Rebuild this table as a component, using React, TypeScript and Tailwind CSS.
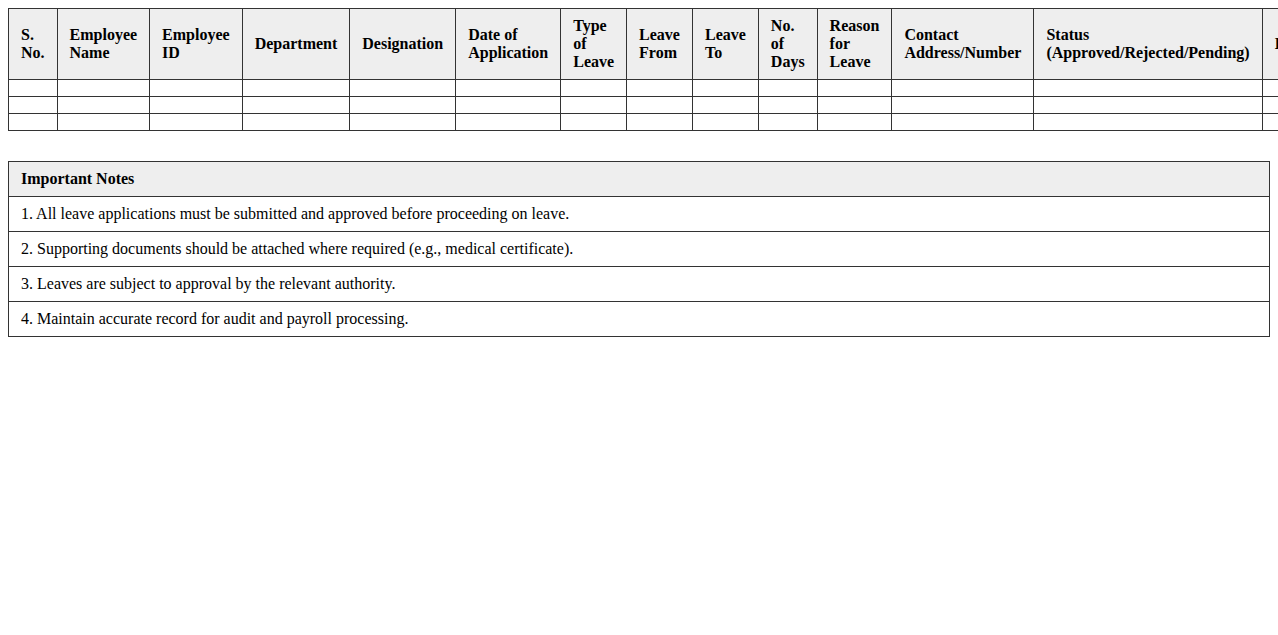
const headers = [
  'S. No.',
  'Employee Name',
  'Employee ID',
  'Department',
  'Designation',
  'Date of Application',
  'Type of Leave',
  'Leave From',
  'Leave To',
  'No. of Days',
  'Reason for Leave',
  'Contact Address/Number',
  'Status (Approved/Rejected/Pending)',
  'Remarks',
];

const notes = [
  '1. All leave applications must be submitted and approved before proceeding on leave.',
  '2. Supporting documents should be attached where required (e.g., medical certificate).',
  '3. Leaves are subject to approval by the relevant authority.',
  '4. Maintain accurate record for audit and payroll processing.',
];

const cell = 'border border-[#333] px-3 py-2 text-left align-middle';

export default function App() {
  return (
    <div className="p-2 bg-white text-black text-[16px] leading-[normal] font-['Liberation_Serif','Times_New_Roman',serif]">
      <table className="w-full border-collapse">
        <thead>
          <tr className="bg-[#eeeeee]">
            {headers.map((h) => (
              <th key={h} className={`${cell} font-bold`}>
                {h}
              </th>
            ))}
          </tr>
        </thead>
        <tbody>
          {[0, 1, 2].map((r) => (
            <tr key={r}>
              {headers.map((h) => (
                <td key={h} className={cell}></td>
              ))}
            </tr>
          ))}
        </tbody>
      </table>

      {/* Notes */}
      <table className="w-full border-collapse mt-[30px]">
        <thead>
          <tr className="bg-[#eeeeee]">
            <th className={`${cell} font-bold`}>Important Notes</th>
          </tr>
        </thead>
        <tbody>
          {notes.map((n) => (
            <tr key={n}>
              <td className={cell}>{n}</td>
            </tr>
          ))}
        </tbody>
      </table>
    </div>
  );
}
